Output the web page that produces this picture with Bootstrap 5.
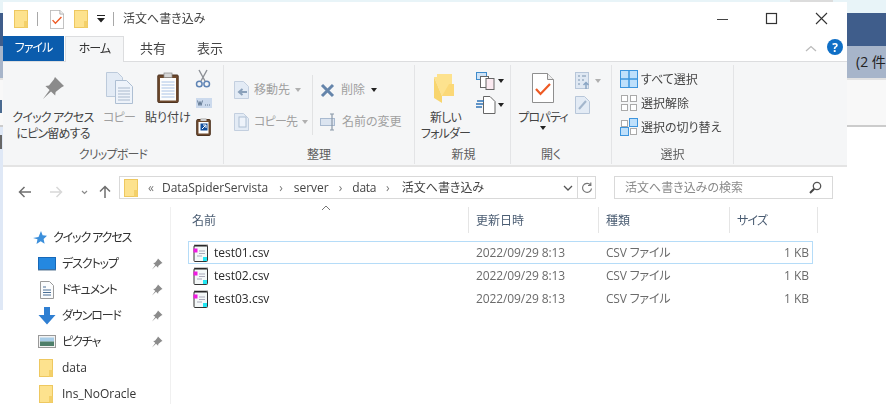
<!DOCTYPE html>
<html lang="ja">
<head>
<meta charset="utf-8">
<title>活文へ書き込み</title>
<link href="https://cdn.jsdelivr.net/npm/bootstrap@5.3.0/dist/css/bootstrap.min.css" rel="stylesheet">
<style>
html,body{margin:0;height:405px;overflow:hidden;background:#fff}
body{font:12px/16px "Open Sans","Noto Sans CJK JP",sans-serif;font-feature-settings:"palt";color:#3a3a3a}
svg{display:block;flex:none;overflow:visible}
.kn{letter-spacing:-.8px}
.bk-top{height:13px;background:#e8f4f8}
.bk-tabtop{width:43px;height:2px;margin-left:790px;background:#dcdcdc}
.bk-dark{height:33px;background:#3f5d8b}
.bk-grey{height:32px;background:#a7b5ca;font-size:14px;line-height:32px;color:#222;padding-left:856px;white-space:nowrap}
.bk-white{height:49px;background:#f8f8f8;border-top:2px solid #e2e2e2;border-bottom:2px solid #ccc;padding-top:20px}
.bk-frag{width:2px;height:13px;background:#4a6a90}
.bk-pale{width:3px;height:183px;background:#dfe8f6;padding-top:8px}
.bk-frag2{width:2px;height:14px;background:#666}
.win{position:absolute;left:3px;top:2px;width:844px;height:403px;background:#fff}
.ttl{height:34px;position:relative}
.ttl-sep{width:1px;height:14px;background:#a8a8a8}
.wctl{position:absolute;top:0;left:0}
.tabs{height:26px;border-bottom:1px solid #dcdddf}
.tb{height:26px;text-align:center;line-height:24px;font-size:13px;color:#444}
.tb-file{width:61px;height:25px;background:#0b5cad;color:#fff;margin-right:1px;font-size:12px;letter-spacing:-1px}
.tb-home{width:59px;background:#f5f6f7;border:1px solid #dcdddf;border-bottom:0;color:#333;font-size:12px;letter-spacing:-1px}
.rib{height:105px;background:#f5f6f7;border-bottom:2px solid #e4e4e4;padding-top:3px}
.grp{height:99px;border-right:1px solid #e3e4e6}
.grp-body{height:79px;padding-top:1px}
.grp-lbl{height:20px;line-height:22px;text-align:center;color:#5d5d5d}
.g1{width:221px;padding-left:9px}
.g2{width:191px}
.g3{width:96px}
.g4{width:101px}
.g5{width:122px}
.big{text-align:center;white-space:nowrap;color:#444}
.slot{height:44px}
.sm-row{height:24px;white-space:nowrap;color:#444}
.sm-row span{position:relative;top:1px}
.dis{color:#a0a0a0}
.mv-row{height:32px;white-space:nowrap}
.vsep{width:1px;height:60px;background:#e1e2e3;margin-top:9px}
.caret{width:0;height:0;border:3px solid transparent;border-top:4px solid #222;border-bottom:0;display:inline-block}
.caret-dis{border-top-color:#b0b0b0}
.adr-row{height:40px;padding-top:9px}
.adr{width:477px;height:23px;border:1px solid #d9d9d9;color:#444;white-space:nowrap}
.srch{width:219px;height:23px;border:1px solid #d9d9d9;margin-left:18px;color:#8a8a8a;padding-left:10px;padding-right:10px}
.crumb-sep{color:#777;font-size:12px}
.main{height:197px}
.nav-pane{width:168px;border-right:1px solid #f0f0f0;height:197px;padding-top:18px}
.nv{height:26px;white-space:nowrap;color:#333;padding-left:35px}
.nv-txt{width:95px;padding-left:6px}
.nv-kn{letter-spacing:-1.1px}
.qa{height:26px;padding-left:30px;white-space:nowrap;color:#2f2f2f;margin-bottom:0}
.lst{padding-left:17px;width:660px}
.hdr{height:26px;color:#4a5c72}
.hc{height:26px;line-height:28px;border-right:1px solid #e5e5e5;position:relative;padding-left:7px}
.c1{width:281px;padding-left:4px}
.c2{width:130px}
.c3{width:131px}
.c4{width:88px}
.sortch{position:absolute;left:133px;top:-2px}
.rows{padding-top:8px}
.frow{height:23px;width:625px;color:#6b6b6b;white-space:nowrap;border:1px solid transparent}
.frow-on{border-color:#b5dcf8}
.fn{width:280px;padding-left:4px;color:#2a2a2a}
.fn span{margin-left:5px}
.fd{width:130px;padding-left:7px;letter-spacing:-.1px}
.ft{width:131px;padding-left:7px;letter-spacing:-.2px}
.fs{width:79px;text-align:right}
.win-in{filter:blur(.3px)}
</style>
</head>
<body>
<svg width="0" height="0" class="position-absolute">
<defs>
<symbol id="fold" viewBox="0 0 14 18"><rect x=".5" y=".5" width="13" height="17" fill="#fde28e" stroke="#eec860"/><rect x="10" y="11" width="3.5" height="6.5" fill="#f3d06a"/></symbol>
<symbol id="csv" viewBox="0 0 16 18"><rect x="1" y="1.500" width="13.500" height="16" rx="1" fill="#f4f8f8" stroke="#333"/><path d="M2 .5v2.500M4 .5v2.500M6 .5v2.500M8 .5v2.500M10 .5v2.500M12 .5v2.500M14 .5v2.500" stroke="#222" stroke-width="1"/><path d="M6 7h6M6 9.500h6M4 12h5" stroke="#aab" stroke-width="1"/><rect x=".5" y="4.500" width="4" height="4" fill="#f01ae0"/><rect x="10" y="13" width="4" height="4" fill="#22e6f2"/></symbol>
<symbol id="pin" viewBox="0 0 12 12"><path d="M7 .5l4.500 4.500-1.200.6-3 2.400-.2 1.800L5 7.700 1 11.500 4.300 7 2.200 5l1.800-.3 2.400-3z" fill="#8b8b8b"/></symbol>
<symbol id="chk" viewBox="0 0 22 30"><path d="M.5.500h15l6 6v23H.500z" fill="#fff" stroke="#8f8f8f"/><path d="M15.500.5v6h6" fill="#eee" stroke="#8f8f8f"/><path d="M4 16l4.500 5L18 11" fill="none" stroke="#ee5a24" stroke-width="2.200"/></symbol>
</defs>
</svg>

<div class="bk-top"><div class="bk-tabtop"></div></div>
<div class="bk-dark"></div>
<div class="bk-grey">(2 件</div>
<div class="bk-white"><div class="bk-frag"></div></div>
<div class="bk-pale"><div class="bk-frag2"></div></div>

<div class="win">
<div class="win-in">
  <div class="ttl d-flex align-items-center">
    <svg width="14" height="18" style="margin-left:11px"><use href="#fold"/></svg>
    <div class="ttl-sep" style="margin-left:9px"></div>
    <svg width="14" height="19" viewBox="0 0 22 30" style="margin-left:12px"><use href="#chk"/></svg>
    <svg width="14" height="18" style="margin-left:10px"><use href="#fold"/></svg>
    <svg width="8" height="8" viewBox="0 0 8 8" style="margin-left:9px"><path d="M0 0h8v1H0zM0 3h8L4 7.500z" fill="#222"/></svg>
    <div class="ttl-sep" style="margin-left:8px"></div>
    <div style="margin-left:9px;color:#444">活文へ書き込み</div>
    <svg class="wctl" width="844" height="34" viewBox="0 0 844 34"><path d="M714 17.500h11" stroke="#444"/><rect x="763.500" y="11.500" width="10" height="10" fill="none" stroke="#333" stroke-width="1.200"/><path d="M813 11l11 11M824 11l-11 11" stroke="#333" stroke-width="1.100"/></svg>
  </div>

  <div class="tabs d-flex position-relative">
    <div class="tb tb-file">ファイル</div>
    <div class="tb tb-home">ホーム</div>
    <div class="tb" style="width:58px">共有</div>
    <div class="tb" style="width:56px">表示</div>
    <svg class="position-absolute" style="left:800px;top:0" width="44" height="24" viewBox="0 0 44 24"><path d="M3 15l5-4.500 5 4.500" fill="none" stroke="#bbb" stroke-width="1.300"/><circle cx="32" cy="11" r="8" fill="#0f6fc6"/><text x="32" y="15.500" text-anchor="middle" font-size="12" font-weight="700" fill="#fff">?</text></svg>
  </div>

  <div class="rib d-flex">
    <div class="grp g1 d-flex flex-column">
      <div class="grp-body d-flex">
        <div class="big kn" style="width:82px"><div class="slot d-flex align-items-center justify-content-center">
          <svg width="24" height="24" viewBox="0 0 12 12"><use href="#pin"/></svg></div>クイック アクセス<br>にピン留めする</div>
        <div class="big dis kn" style="width:40px;margin-left:5px"><div class="slot d-flex align-items-center justify-content-center">
          <svg width="27" height="32" viewBox="0 0 27 32"><path d="M.5.500h11l5 5v19H.500z" fill="#e3ebf5" stroke="#bccadb"/><path d="M9.500 8.500h11l6 6v17h-17z" fill="#eef3fa" stroke="#aebfd3"/><path d="M12 16h12M12 19h12M12 22h12M12 25h12M12 28h12" stroke="#a9b9cd"/></svg></div>コピー</div>
        <div class="big" style="width:45px;margin-left:6px"><div class="slot d-flex align-items-center justify-content-center">
          <svg width="22" height="30" viewBox="0 0 22 30"><rect x=".8" y="2" width="20.400" height="27.500" fill="#6e4a2e" stroke="#4d3320" rx="1"/><rect x="3" y="5" width="16" height="22.500" fill="#fdfdfd"/><path d="M4.500 9h13M4.500 12h13M4.500 15h13M4.500 18h13M4.500 21h13M4.500 24h13" stroke="#aac3e6"/><rect x="7" y="0" width="8" height="4.500" fill="#d6d6d6" stroke="#8a8a8a" stroke-width=".7"/></svg></div>貼り付け</div>
        <div style="margin-left:6px;margin-top:1px">
          <div class="sm-row d-flex align-items-center"><svg width="14" height="18" viewBox="0 0 14 18"><path d="M3 0l6 11M11 0L5 11" stroke="#8c9096" stroke-width="1.400"/><circle cx="3.300" cy="14" r="2.800" fill="none" stroke="#5f84b5" stroke-width="1.500"/><circle cx="10.700" cy="14" r="2.800" fill="none" stroke="#5f84b5" stroke-width="1.500"/></svg></div>
          <div class="sm-row d-flex align-items-center"><svg width="16" height="10" viewBox="0 0 16 10"><rect width="16" height="10" fill="#ccdaed"/><path d="M1.500 2.500l1.500 5 1-4 1 4 1.500-5M9 7h1M11 7h1M13 7h1" stroke="#4d6580" fill="none" stroke-width=".8"/></svg></div>
          <div class="sm-row d-flex align-items-center"><svg width="15" height="18" viewBox="0 0 15 18"><rect x=".7" y="1.500" width="13.600" height="16" rx="1" fill="#6e4a2e" stroke="#4d3320"/><rect x="2.500" y="4" width="10" height="11.500" fill="#fff"/><rect x="4.500" y="5.500" width="7" height="7" fill="#134f9c"/><path d="M6 11l3.500-3.500M7 7h3v3" stroke="#fff" fill="none"/><rect x="4.500" y="0" width="6" height="3" fill="#ccc"/></svg></div>
        </div>
      </div>
      <div class="grp-lbl kn" style="margin-left:-9px">クリップボード</div>
    </div>

    <div class="grp g2 d-flex flex-column">
      <div class="grp-body d-flex">
        <div style="padding:8px 0 0 10px;width:88px" class="dis">
          <div class="mv-row d-flex align-items-center"><svg width="15" height="18" viewBox="0 0 15 18"><path d="M.5.500h9l5 5v12H.500z" fill="#e3ebf5" stroke="#c3cfdf"/><path d="M13 11H6M8.500 8L5 11l3.500 3" stroke="#8ba1ba" fill="none" stroke-width="2"/></svg><span style="margin-left:5px">移動先</span><i class="caret caret-dis" style="margin-left:5px"></i></div>
          <div class="mv-row d-flex align-items-center"><svg width="15" height="18" viewBox="0 0 15 18"><path d="M.5.500h9l5 5v12H.500z" fill="#e3ebf5" stroke="#c3cfdf"/><rect x="5" y="4" width="7" height="10" fill="#eef3fa" stroke="#aebfd3"/></svg><span class="kn" style="margin-left:5px">コピー先</span><i class="caret caret-dis" style="margin-left:5px"></i></div>
        </div>
        <div class="vsep"></div>
        <div style="padding:8px 0 0 7px">
          <div class="mv-row d-flex align-items-center"><svg width="15" height="15" viewBox="0 0 15 15"><path d="M2 2l11 11M13 2L2 13" stroke="#6585ab" stroke-width="3"/></svg><span class="dis" style="margin-left:6px">削除</span><i class="caret" style="margin-left:6px"></i></div>
          <div class="mv-row d-flex align-items-center"><svg width="18" height="18" viewBox="0 0 18 18"><rect x=".5" y="5.500" width="14" height="7" fill="#dbe4f0" stroke="#a9bad0"/><path d="M12 1.500v15M10 1h4M10 17h4" stroke="#8a98a8" stroke-width="1.200"/></svg><span class="dis" style="margin-left:4px">名前の変更</span></div>
        </div>
      </div>
      <div class="grp-lbl">整理</div>
    </div>

    <div class="grp g3 d-flex flex-column">
      <div class="grp-body d-flex">
        <div class="big kn" style="width:62px;margin-left:-1px;padding-left:1px"><div class="slot d-flex align-items-center justify-content-center">
          <svg width="20" height="29" viewBox="0 0 20 29" style="margin-right:4px"><path d="M0 3h3V0h15v22H8z" fill="#fde28e"/><path d="M0 3l8 19v7L0 24z" fill="#f8d56e"/><path d="M8 22h12V10h-5z" fill="#fbd877"/></svg></div>新しい<br>フォルダー</div>
        <div style="margin-top:3px">
          <div class="d-flex align-items-center" style="height:24px"><svg width="20" height="18" viewBox="0 0 20 18"><rect x=".5" y=".5" width="10" height="7" fill="#cfe3f7" stroke="#3f8ccc"/><rect x="4.500" y="4.500" width="8" height="11" fill="#fff" stroke="#666"/><rect x="10" y="6.500" width="8" height="11" fill="#fbeaf1" stroke="#666"/></svg><i class="caret" style="margin-left:2px"></i></div>
          <div class="d-flex align-items-center" style="height:24px"><svg width="20" height="18" viewBox="0 0 20 18"><path d="M7.500.5H14l5 5v12H7.500z" fill="#fff" stroke="#666"/><path d="M1 5h7M0 8h7M0 11h6" stroke="#2f74b8" stroke-width="1.500"/></svg><i class="caret" style="margin-left:2px"></i></div>
        </div>
      </div>
      <div class="grp-lbl" style="padding-left:2px">新規</div>
    </div>

    <div class="grp g4 d-flex flex-column">
      <div class="grp-body d-flex">
        <div class="big kn" style="width:66px;margin-left:-1px"><div class="slot d-flex align-items-center justify-content-center">
          <svg width="22" height="30" viewBox="0 0 22 30"><use href="#chk"/></svg></div>プロパティ<div class="d-flex justify-content-center"><i class="caret"></i></div></div>
        <div style="margin-top:3px;margin-left:-1px">
          <div class="d-flex align-items-center" style="height:24px"><svg width="15" height="18" viewBox="0 0 15 18"><rect x=".5" y=".5" width="13" height="16" fill="#dfe8f3" stroke="#b7c6d9"/><path d="M3 4h2M7 4h4M3 8h2M7 8h2M3 12h2" stroke="#7b92ad" stroke-width="1.200"/><path d="M11 17v-6M8.500 13l2.500-2.500 2.500 2.500" stroke="#8aa5c4" fill="none" stroke-width="1.500"/></svg><i class="caret caret-dis" style="margin-left:5px"></i></div>
          <div class="d-flex align-items-center" style="height:24px"><svg width="15" height="18" viewBox="0 0 15 18"><path d="M.5.500h9l5 5v12H.500z" fill="#e3ebf5" stroke="#b7c6d9"/><path d="M4 13l7-8" stroke="#a3b6cc" stroke-width="2"/></svg></div>
        </div>
      </div>
      <div class="grp-lbl" style="padding-right:20px">開く</div>
    </div>

    <div class="grp g5 d-flex flex-column">
      <div class="grp-body" style="padding-left:8px">
        <div style="margin-top:1px">
          <div class="sm-row d-flex align-items-center"><svg width="18" height="18" viewBox="0 0 18 18"><rect x=".5" y=".5" width="17" height="17" fill="#bfe0fb" stroke="#3d95de"/><path d="M9 0v18M0 9h18" stroke="#3d95de" stroke-width="1.500"/></svg><span style="margin-left:3px">すべて選択</span></div>
          <div class="sm-row d-flex align-items-center"><svg width="18" height="16" viewBox="0 0 18 16"><rect x="1.500" y=".5" width="6" height="6" fill="#fff" stroke="#aaa"/><rect x="10.500" y=".5" width="6" height="6" fill="#fff" stroke="#aaa"/><rect x="1.500" y="9.500" width="6" height="6" fill="#fff" stroke="#aaa"/><rect x="10.500" y="9.500" width="6" height="6" fill="#fff" stroke="#aaa"/></svg><span style="margin-left:3px">選択解除</span></div>
          <div class="sm-row d-flex align-items-center"><svg width="18" height="18" viewBox="0 0 18 18"><rect x="1.500" y="2.500" width="6" height="6" fill="#fff" stroke="#aaa"/><rect x="9.500" y=".5" width="8" height="8" fill="#bfe0fb" stroke="#3d95de"/><rect x=".5" y="9.500" width="8" height="8" fill="#bfe0fb" stroke="#3d95de"/><rect x="10.500" y="10.500" width="6" height="6" fill="#fff" stroke="#aaa"/></svg><span style="margin-left:3px">選択の切り替え</span></div>
        </div>
      </div>
      <div class="grp-lbl">選択</div>
    </div>
    <div class="flex-grow-1"></div>
  </div>

  <div class="adr-row d-flex">
    <div class="d-flex align-items-center" style="width:116px;padding-left:15px">
      <svg width="96" height="14" viewBox="0 0 96 14"><path d="M13 7H1.500M6.500 2L1.500 7l5 5" fill="none" stroke="#6f6f6f" stroke-width="1.500"/><path d="M32 7h11.500M38.500 2l5 5-5 5" fill="none" stroke="#d8d8d8" stroke-width="1.500"/><path d="M64 6l2.500 2.500L69 6" fill="none" stroke="#8a8a8a" stroke-width="1.200"/><path d="M87 13V1.500M82 6.500l5-5 5 5" fill="none" stroke="#6f6f6f" stroke-width="1.500"/></svg>
    </div>
    <div class="adr d-flex align-items-center">
      <svg width="14" height="18" style="margin-left:4px"><use href="#fold"/></svg>
      <span class="crumb-sep" style="margin-left:10px">«</span>
      <span style="margin-left:8px">DataSpiderServista</span>
      <span class="crumb-sep" style="margin-left:11px">›</span>
      <span style="margin-left:11px">server</span>
      <span class="crumb-sep" style="margin-left:10px">›</span>
      <span style="margin-left:10px;letter-spacing:-.3px">data</span>
      <span class="crumb-sep" style="margin-left:10px">›</span>
      <span style="margin-left:12px">活文へ書き込み</span>
      <svg class="ms-auto" width="10" height="6" viewBox="0 0 10 6" style="margin-right:4px"><path d="M1 1l4 4 4-4" fill="none" stroke="#555" stroke-width="1.300"/></svg>
      <div style="width:1px;height:21px;background:#d9d9d9"></div>
      <svg width="12" height="12" viewBox="0 0 12 12" style="margin:0 2px 0 3px"><path d="M9.500 3A4.500 4.500 0 1 0 10.500 6.500M9.800 .5V3.500H7" fill="none" stroke="#777" stroke-width="1.200"/></svg>
    </div>
    <div class="srch d-flex align-items-center justify-content-between">
      <span>活文へ書き込みの検索</span>
      <svg width="13" height="13" viewBox="0 0 13 13"><circle cx="8" cy="5" r="3.700" fill="none" stroke="#555" stroke-width="1.300"/><path d="M5.200 7.800L1 12" stroke="#444" stroke-width="2"/></svg>
    </div>
  </div>

  <div class="main d-flex">
    <div class="nav-pane">
      <div class="qa d-flex align-items-center">
        <svg width="14" height="14" viewBox="0 0 14 14"><path d="M8 0l1.600 4.300L14 4.800 10.600 8l1 4.700L7.700 10.300 3.500 13l1-4.700L0 7l5.500-1z" fill="#3c8fdb"/></svg>
        <span class="nv-kn" style="margin-left:6px">クイック アクセス</span>
      </div>
      <div class="nv d-flex align-items-center"><svg width="18" height="14" viewBox="0 0 18 14"><rect x=".5" y=".5" width="17" height="12" fill="#2488e0" stroke="#1668b8"/><path d="M0 13h18" stroke="#5c7a96"/></svg><span class="nv-txt nv-kn">デスクトップ</span><svg width="12" height="12"><use href="#pin"/></svg></div>
      <div class="nv d-flex align-items-center"><svg width="18" height="18" viewBox="0 0 18 18"><path d="M2.500.5h9l4 4v13h-13z" fill="#fbfcfd" stroke="#9a9a9a"/><path d="M5 6h3M5 9h8M5 11.500h8M5 14h8" stroke="#4a6f96"/></svg><span class="nv-txt nv-kn">ドキュメント</span><svg width="12" height="12"><use href="#pin"/></svg></div>
      <div class="nv d-flex align-items-center"><svg width="18" height="18" viewBox="0 0 18 18"><path d="M6 0h6v8h5.500L9 17.500.5 8H6z" fill="#2f7fd2"/></svg><span class="nv-txt nv-kn">ダウンロード</span><svg width="12" height="12"><use href="#pin"/></svg></div>
      <div class="nv d-flex align-items-center"><svg width="18" height="14" viewBox="0 0 18 14"><rect x=".5" y=".5" width="17" height="12" fill="#f3f3f3" stroke="#999"/><rect x="2" y="2.500" width="14" height="4" fill="#a8cde8"/><rect x="2" y="6.500" width="14" height="4.500" fill="#4e7f6a"/></svg><span class="nv-txt nv-kn">ピクチャ</span><svg width="12" height="12"><use href="#pin"/></svg></div>
      <div class="nv d-flex align-items-center"><svg width="14" height="18" style="margin-left:1px;margin-right:3px"><use href="#fold"/></svg><span class="nv-txt">data</span></div>
      <div class="nv d-flex align-items-center"><svg width="14" height="18" style="margin-left:1px;margin-right:3px"><use href="#fold"/></svg><span class="nv-txt">Ins_NoOracle</span></div>
    </div>

    <div class="lst">
      <div class="hdr d-flex">
        <div class="hc c1">名前<svg class="sortch" width="10" height="6" viewBox="0 0 10 6"><path d="M1 5l4-4 4 4" fill="none" stroke="#777"/></svg></div>
        <div class="hc c2">更新日時</div>
        <div class="hc c3">種類</div>
        <div class="hc c4 kn">サイズ</div>
      </div>
      <div class="rows">
        <div class="frow frow-on d-flex align-items-center"><div class="fn d-flex align-items-center"><svg width="16" height="18"><use href="#csv"/></svg><span>test01.csv</span></div><div class="fd">2022/09/29 8:13</div><div class="ft">CSV ファイル</div><div class="fs">1 KB</div></div>
        <div class="frow d-flex align-items-center"><div class="fn d-flex align-items-center"><svg width="16" height="18"><use href="#csv"/></svg><span>test02.csv</span></div><div class="fd">2022/09/29 8:13</div><div class="ft">CSV ファイル</div><div class="fs">1 KB</div></div>
        <div class="frow d-flex align-items-center"><div class="fn d-flex align-items-center"><svg width="16" height="18"><use href="#csv"/></svg><span>test03.csv</span></div><div class="fd">2022/09/29 8:13</div><div class="ft">CSV ファイル</div><div class="fs">1 KB</div></div>
      </div>
    </div>
  </div>
</div>
</div>
<script src="https://cdn.jsdelivr.net/npm/bootstrap@5.3.0/dist/js/bootstrap.bundle.min.js"></script>
</body>
</html>
